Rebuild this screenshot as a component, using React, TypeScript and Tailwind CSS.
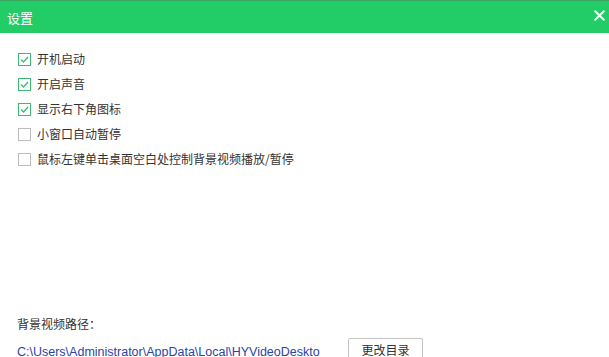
import React from "react";

const items: { label: string; checked: boolean }[] = [
  { label: "开机启动", checked: true },
  { label: "开启声音", checked: true },
  { label: "显示右下角图标", checked: true },
  { label: "小窗口自动暂停", checked: false },
  { label: "鼠标左键单击桌面空白处控制背景视频播放/暂停", checked: false },
];

const font = { fontFamily: '"Noto Sans CJK SC", "Noto Sans", sans-serif' };

export default function App() {
  return (
    <div className="w-[609px] h-[357px] bg-white overflow-hidden flex flex-col" style={font}>
      <div className="h-[33px] bg-[#22cc66] border-t border-[#3aa560] flex items-center justify-between pl-[7px] pr-[3px] shrink-0">
        <span className="text-white text-[13px] leading-none">设置</span>
        <svg width="11" height="11" viewBox="0 0 11 11" className="mr-[1px] mb-[3px]">
          <path d="M1.2 1.2 L9.8 9.8 M9.8 1.2 L1.2 9.8" stroke="white" strokeWidth="2" strokeLinecap="round" />
        </svg>
      </div>
      <div className="flex flex-col gap-[11px] pl-[18px] pt-[19px]">
        {items.map((it) => (
          <div key={it.label} className="flex items-center gap-[6px] h-[14px]">
            <div
              className={
                "w-[13px] h-[13px] border flex items-center justify-center bg-white " +
                (it.checked ? "border-[#3fb874]" : "border-[#bdbdbd]")
              }
            >
              {it.checked && (
                <svg width="11" height="11" viewBox="0 0 11 11">
                  <path d="M2 5.5 L4.5 8 L9 3" stroke="#3fb874" strokeWidth="1.3" fill="none" />
                </svg>
              )}
            </div>
            <span className="text-[12px] text-[#333] leading-none">{it.label}</span>
          </div>
        ))}
      </div>
      <div className="flex-1" />
      <div className="pl-[17px] flex flex-col -mb-[2px]">
        <span className="text-[12px] text-[#333] leading-none">背景视频路径：</span>
        <div className="flex items-start mt-[8px] h-[21px]">
          <span
            className="text-[12.5px] text-[#2a44a8] w-[302px] whitespace-nowrap leading-none pt-[8px]"
            style={{ fontFamily: '"Liberation Sans", Arial, sans-serif' }}
          >
            C:\Users\Administrator\AppData\Local\HYVideoDeskto
          </span>
          <button className="ml-[29px] w-[75px] h-[26px] border border-[#c4c4c4] rounded-[2px] bg-white text-[12px] text-[#333] leading-none pb-[3px]">
            更改目录
          </button>
        </div>
      </div>
    </div>
  );
}
